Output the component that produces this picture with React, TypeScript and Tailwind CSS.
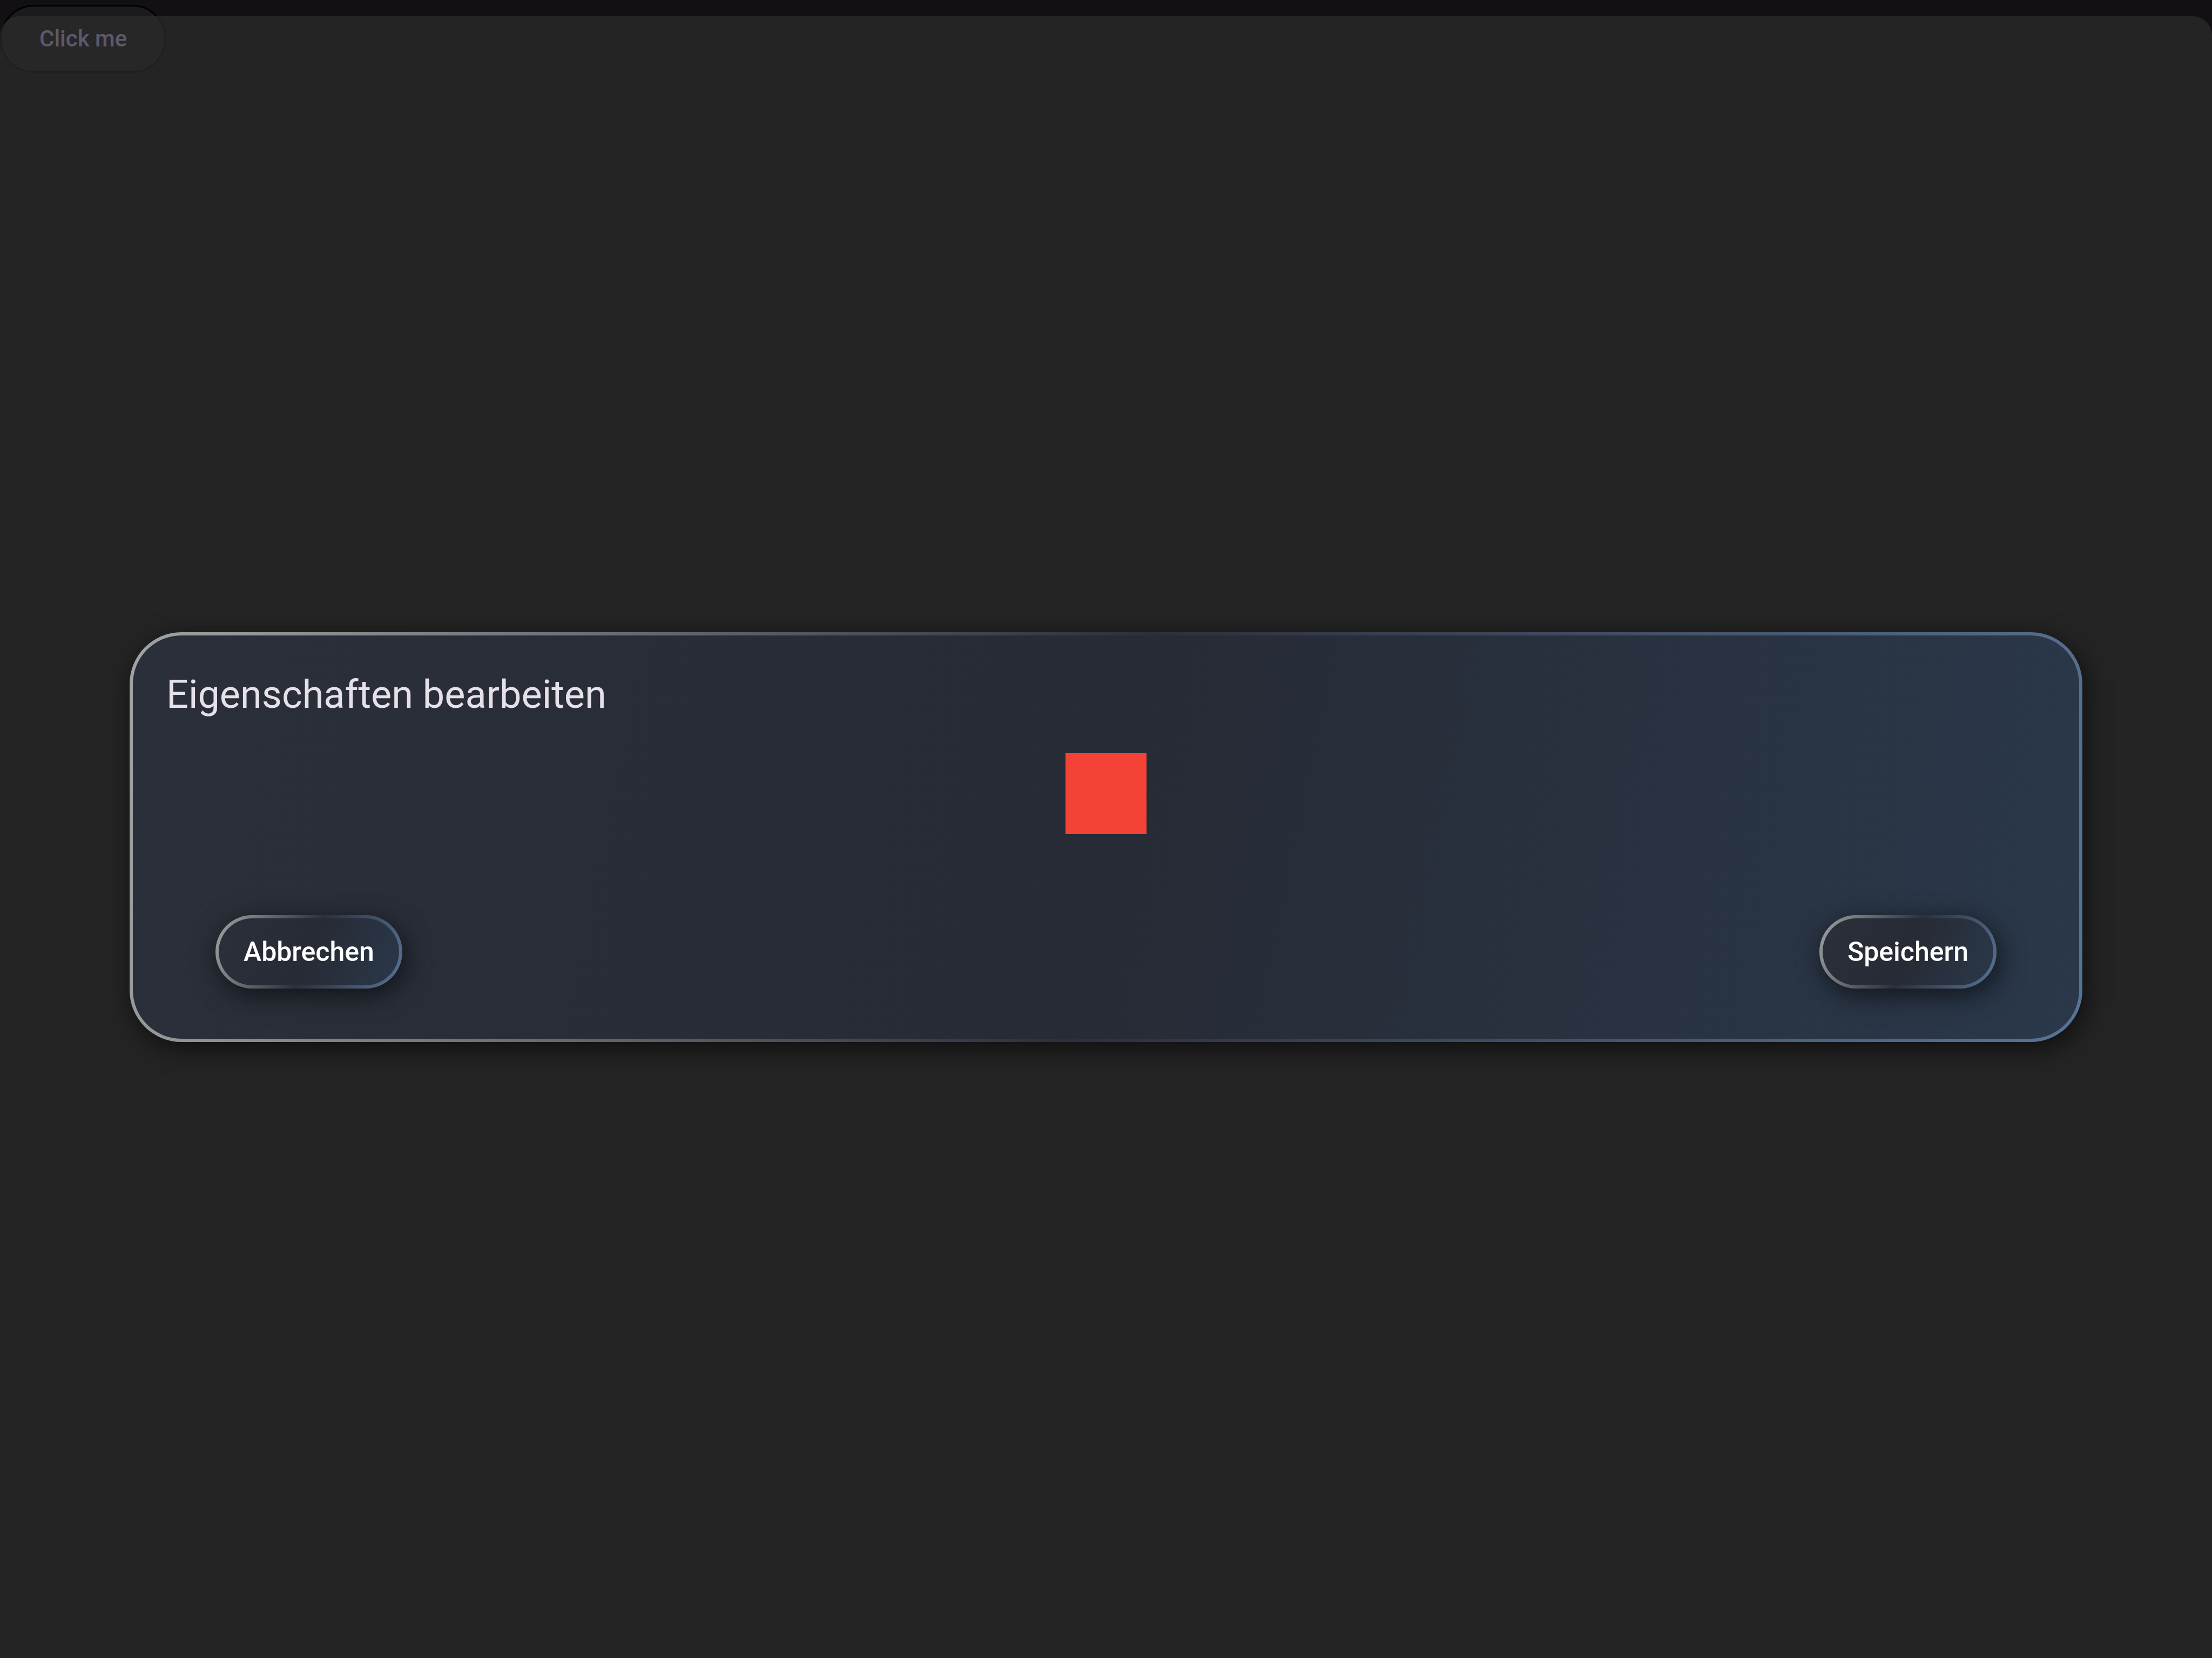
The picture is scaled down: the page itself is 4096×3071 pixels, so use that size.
import type { ReactNode } from "react";

const outerFrame = "bg-[linear-gradient(102deg,#a0a4a3_0%,#2d2f3b_50%,#587495_100%)]";
const panelFill = "bg-[linear-gradient(102deg,#2a2f39_0%,#272b35_50%,#2a384a_100%)]";

function PillButton({ children }: { children: ReactNode }) {
  return (
    <button
      type="button"
      className="rounded-full bg-[linear-gradient(112deg,#a0a4a3_0%,#2d2f3b_50%,#587495_100%)] p-1.5 shadow-[6px_12px_48px_rgba(0,0,0,0.6)]"
    >
      <span className="flex h-[124px] items-center rounded-full bg-[linear-gradient(112deg,#2a2f39_0%,#272b35_50%,#2a384a_100%)] px-[46px] text-[50px] leading-[60px] font-medium text-white">
        {children}
      </span>
    </button>
  );
}

function PropertiesDialog() {
  return (
    <section
      role="dialog"
      aria-labelledby="dialog-title"
      className={`w-full rounded-[96px] p-1.5 shadow-[6px_12px_48px_rgba(0,0,0,0.6)] ${outerFrame}`}
    >
      <div className={`flex flex-col rounded-[90px] px-[62px] pt-[68px] pb-[93px] ${panelFill}`}>
        <h1 id="dialog-title" className="text-[72px] leading-[84px] font-normal text-[#e6e0e9]">
          Eigenschaften bearbeiten
        </h1>
        <div className="mt-[66px] size-[150px] self-center bg-[#f44336]" />
        <div className="mt-[150px] flex justify-between px-[91px]">
          <PillButton>Abbrechen</PillButton>
          <PillButton>Speichern</PillButton>
        </div>
      </div>
    </section>
  );
}

export default function App() {
  return (
    <div className="relative flex min-h-screen flex-col bg-[#131015] pt-[30px] font-['Roboto',sans-serif]">
      <button
        type="button"
        className="absolute top-[9px] left-0 h-[126px] rounded-full border-3 border-black bg-[#1b1a1e] px-[70px] text-[42px] leading-[60px] font-medium text-[#d0bcff]"
      >
        Click me
      </button>
      <main className="relative flex flex-1 flex-col justify-center rounded-t-[36px] bg-[#2c2d2b]/70 px-60">
        <PropertiesDialog />
      </main>
    </div>
  );
}
